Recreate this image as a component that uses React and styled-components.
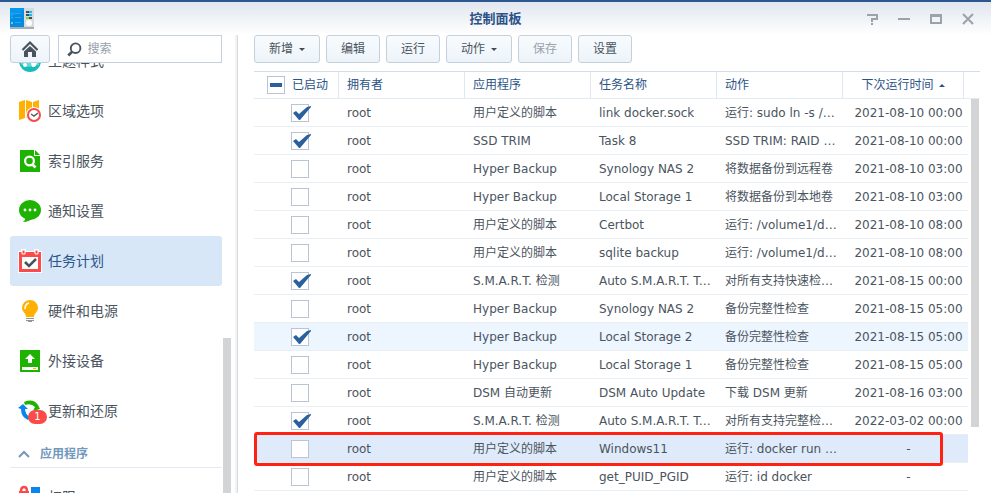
import React, { useState } from 'react';
import styled, { createGlobalStyle, css } from 'styled-components';

const GlobalStyle = createGlobalStyle`
  * { box-sizing: border-box; }
  body {
    margin: 0;
    background: #fff;
    color: #4a545e;
    font: 12px/18px "DejaVu Sans", "Noto Sans CJK SC", sans-serif;
  }
  button, input { font: inherit; color: inherit; }
`;

const Window = styled.div`
  display: flex;
  flex-direction: column;
  height: 100vh;
  overflow: hidden;
  border-top: 2px solid #2c578f;
`;

const TitleBar = styled.header`
  display: grid;
  grid-template-columns: 1fr auto 1fr;
  align-items: center;
  flex: none;
  height: 33px;
  padding: 0 10px;
  background: linear-gradient(#e0e6ef, #fff);
`;

const Title = styled.h1`
  margin: 0;
  font-size: 13px;
  line-height: 18px;
  font-weight: 700;
  color: #2b5388;
`;

const WindowControls = styled.div`
  display: flex;
  justify-content: flex-end;
  gap: 16px;
  padding-right: 5px;
`;

const WindowButton = styled.button`
  width: 16px;
  height: 16px;
  padding: 0;
  border: 0;
  background: none;
  svg { display: block; }
`;

const Body = styled.div`
  display: flex;
  flex: 1;
  min-height: 0;
`;

const Sidebar = styled.aside`
  display: flex;
  flex-direction: column;
  flex: none;
  width: 238px;
  border-right: 1px solid #d6dadd;
  box-shadow: inset -2px 0 1px #f1f2f3;
`;

const SidebarTools = styled.div`
  display: flex;
  gap: 8px;
  flex: none;
  padding: 0 15px 0 10px;
`;

const buttonFace = css`
  height: 28px;
  border: 1px solid #c5d0dc;
  border-radius: 3px;
  background: linear-gradient(#f7fbfe, #edf4f9);
`;

const HomeButton = styled.button`
  ${buttonFace}
  display: flex;
  align-items: center;
  justify-content: center;
  width: 40px;
  padding: 0;
`;

const SearchBox = styled.label`
  display: flex;
  align-items: center;
  gap: 6px;
  flex: 1;
  height: 28px;
  padding: 0 8px;
  border: 1px solid #c5d0dc;
`;

const SearchInput = styled.input`
  width: 100%;
  min-width: 0;
  padding: 0;
  border: 0;
  outline: 0;
  background: none;
  &::placeholder { color: #96a0aa; opacity: 1; }
`;

const SidebarBody = styled.div`
  display: flex;
  flex: 1;
  min-height: 0;
  padding: 0 6px 0 10px;
  overflow: hidden;
`;

const NavList = styled.nav`
  flex: 1;
  margin-top: -27px;
  clip-path: inset(27px 0 0 0);
`;

const NavItem = styled.a`
  display: flex;
  align-items: center;
  gap: 6px;
  height: 50px;
  padding-left: 8px;
  border-radius: 3px;
  font-size: 14px;
  text-decoration: none;
  color: ${p => (p.$active ? '#2b5388' : '#4a545e')};
  background: ${p => (p.$active ? '#d7e7f8' : 'transparent')};
`;

const NavIcon = styled.span`
  position: relative;
  width: 24px;
  height: 24px;
  svg { display: block; }
`;

const CountBadge = styled.span`
  position: absolute;
  right: -5px;
  bottom: -1px;
  width: 19px;
  height: 14px;
  border-radius: 7px;
  background: #fa4a4a;
  color: #fff;
  font-size: 10px;
  line-height: 14px;
  text-align: center;
`;

const GroupButton = styled.button`
  display: flex;
  align-items: center;
  gap: 10px;
  width: 100%;
  height: 32px;
  margin-bottom: 4px;
  padding: 4px 0 0 8px;
  border: 0;
  border-bottom: 1px solid #e3eaf1;
  background: none;
  font-weight: 700;
  color: #7298bd;
`;

const ScrollTrack = styled.div`
  flex: none;
  width: 8px;
  margin-left: 1px;
  padding-top: 275px;
`;

const ScrollThumb = styled.div`
  width: 8px;
  height: 100%;
  background: #d2d4d6;
`;

const Main = styled.main`
  flex: 1;
  min-width: 0;
  padding: 0 11px 0 16px;
  overflow: hidden;
`;

const Toolbar = styled.div`
  display: flex;
  gap: 6px;
  margin-bottom: 8px;
`;

const ToolButton = styled.button`
  ${buttonFace}
  display: flex;
  align-items: center;
  gap: 6px;
  padding: 0 14px;
  &:disabled { color: #9aa3ac; }
`;

const TableArea = styled.div`
  position: relative;
`;

const TaskTable = styled.table`
  width: 100%;
  table-layout: fixed;
  border-spacing: 0;
  border-top: 1px solid #d3dde7;
`;

const Col = styled.col`
  width: ${p => p.$width}px;
`;

const HeadCell = styled.th`
  height: 27px;
  padding: 0 8px;
  border-bottom: 1px solid #e3ebf2;
  border-right: ${p => (p.$last ? '0' : '1px solid #dfe8f1')};
  color: #2b5388;
  font-weight: 400;
  text-align: ${p => (p.$center ? 'center' : 'left')};
  white-space: nowrap;
`;

const Row = styled.tr`
  position: relative;
  --row: ${p => ({ hover: '#edf5fe', selected: '#dfebfa' })[p.$state] || '#fff'};
`;

const Cell = styled.td`
  height: 28px;
  padding: 0 ${p => (p.$center ? 0 : 2)}px 0 ${p => (p.$center ? 6 : 8)}px;
  border-bottom: 1px solid #e9eff5;
  background: var(--row);
  text-align: ${p => (p.$center ? 'center' : 'left')};
  white-space: nowrap;
  overflow: hidden;
  text-overflow: ellipsis;
`;

const CheckCell = styled(Cell)`
  padding: 0 0 0 37px;
  overflow: visible;
`;

const GutterCell = styled.td`
  padding: 0;
`;

const EnabledLabel = styled.label`
  display: flex;
  align-items: center;
  gap: 7px;
  padding-left: 5px;
`;

const CheckWrap = styled.span`
  position: relative;
  display: block;
  width: 18px;
  height: 18px;
  svg {
    position: absolute;
    left: 0;
    top: 0;
    pointer-events: none;
  }
`;

const CheckInput = styled.input`
  appearance: none;
  display: block;
  width: 18px;
  height: 18px;
  margin: 0;
  border: 1px solid #bac4d5;
  background: #fff;
`;

const TableThumb = styled.div`
  position: absolute;
  top: 28px;
  right: 1px;
  width: 8px;
  height: 328px;
  background: #d2d4d6;
`;

const Highlight = styled.div`
  position: absolute;
  inset: -3px 37px -3px 0;
  z-index: 1;
  border: 3px solid #ff2213;
  border-radius: 3px;
  pointer-events: none;
`;

const SortArrow = styled.svg`
  margin-left: 5px;
  vertical-align: middle;
`;

function AppIcon() {
  return (
    <svg width="24" height="21" viewBox="0 0 24 21" aria-hidden="true">
      <rect y="19" width="24" height="2" fill="#a5adb5" />
      <path d="M0 0H14V19H0Z" fill="#0797ed" />
      <path d="M0 10L14 2V19H0Z" fill="#078be0" />
      <path d="M14 0H24V19H14Z" fill="#d6dbe0" />
      <path d="M1 5.5L2 6.5L3 5M1 9.5L2 10.5L3 9" fill="none" stroke="#35b7f5" />
      <path d="M1 14H3V16H1Z" fill="#5fd0fa" />
      <path d="M5 5.5H11M5 9.5H11M5 14.5H11" stroke="#22a9f0" />
      <path d="M16 4H22M16 7H22M16 10H22" stroke="#405059" strokeWidth="2" />
      <path d="M19 4H22M19 7H22" stroke="#1abaf2" strokeWidth="2" />
      <path d="M16 10H19" stroke="#80da22" strokeWidth="2" />
      <circle cx="19" cy="15" r="3" fill="#fff" />
    </svg>
  );
}

const controlShapes = {
  帮助: <path d="M3 4H13V8H8V11M8 12V14" strokeWidth="2" />,
  最小化: <path d="M2 8H14" strokeWidth="2" />,
  最大化: (
    <>
      <path d="M2 4.5H14" strokeWidth="3" />
      <path d="M3 5V12H13V5" strokeWidth="2" />
    </>
  ),
  关闭: <path d="M3 3L13 13M13 3L3 13" strokeWidth="2" />,
};

function HomeIcon() {
  return (
    <svg width="18" height="18" viewBox="0 0 18 18" fill="none" aria-hidden="true">
      <path d="M1.5 10L9 2.5L16.5 10" stroke="#48535e" strokeWidth="2.2" />
      <path d="M3 11.5L9 6L15 11.5V17H11V12H7V17H3Z" fill="#48535e" />
    </svg>
  );
}

function SearchIcon() {
  return (
    <svg width="17" height="17" viewBox="0 0 17 17" fill="none" stroke="#48535e" aria-hidden="true">
      <circle cx="10" cy="7" r="5.6" strokeWidth="2.2" />
      <path d="M6 11L1.5 15.5" strokeWidth="3.2" />
    </svg>
  );
}

const navShapes = {
  theme: (
    <>
      <circle cx="12" cy="12" r="11" fill="#17bcbd" />
      <path d="M3 15Q7 20 21 16L20 11H3Z" fill="#5fdcd8" />
      <circle cx="7" cy="16" r="2" fill="#fff" />
      <path d="M13 14H19L17 18H14Z" fill="#fff" />
    </>
  ),
  region: (
    <>
      <path d="M1 3L7 1V19L1 21Z" fill="#ffb000" />
      <path d="M8 1L14 3V21L8 19Z" fill="#ffb000" />
      <path d="M15 3L21 1V18L15 20Z" fill="#ffb000" />
      <circle cx="16" cy="16" r="8" fill="#fff" />
      <circle cx="16" cy="16" r="6" fill="#fff" stroke="#f74a4e" strokeWidth="2" />
      <path d="M13 15L16 17L20 14" fill="none" stroke="#505a64" strokeWidth="1.5" />
    </>
  ),
  index: (
    <>
      <path d="M2 1H16V7H22V23H2Z" fill="#1eb300" />
      <path d="M17 1L22 6H17Z" fill="#1eb300" />
      <circle cx="11.5" cy="12" r="4.4" fill="none" stroke="#fff" strokeWidth="2.2" />
      <path d="M14 15L17.5 18.5" stroke="#fff" strokeWidth="2.6" />
    </>
  ),
  notify: (
    <>
      <ellipse cx="12" cy="11" rx="11" ry="10" fill="#1eb300" />
      <path d="M7 18L7 21L5 23Q11 23 15 19Z" fill="#1eb300" />
      <circle cx="7" cy="11" r="1.4" fill="#fff" />
      <circle cx="12" cy="11" r="1.4" fill="#fff" />
      <circle cx="17" cy="11" r="1.4" fill="#fff" />
    </>
  ),
  tasks: (
    <>
      <path d="M0 2H3V0H8V2H16V0H21V2H24V24H0Z" fill="#fff" />
      <path d="M1 3H23V23H1Z" fill="#fa4a4a" />
      <path d="M4 8H20V20H4Z" fill="#fff" />
      <path d="M4 1H7V5H4ZM17 1H20V5H17Z" fill="#fa4a4a" stroke="#fff" />
      <path d="M7 13L11 17L18 10" fill="none" stroke="#48535e" strokeWidth="2.5" />
    </>
  ),
  power: (
    <>
      <path d="M12 1A8 8 0 0 0 4 9C4 13 8 14 8 18H16C16 14 20 13 20 9A8 8 0 0 0 12 1Z" fill="#ffb000" />
      <path d="M7 10Q7 5 11 4" fill="none" stroke="#fff" strokeWidth="1.6" />
      <path d="M8 19.5H16M8 21.5H16M10 22.5H14" stroke="#8b969f" />
    </>
  ),
  external: (
    <>
      <path d="M2 1H22V23H2Z" fill="#1eb300" />
      <path d="M12 5L17 10H14V14H10V10H7Z" fill="#fff" />
      <path d="M4 18H20V21H4Z" fill="#fff" />
      <path d="M15 19.5H18" stroke="#ffb000" />
    </>
  ),
  update: (
    <>
      <path d="M6 3Q15 -1 20 6L22 10L15 12L17 8Q13 4 7 6Z" fill="#1eb300" />
      <path d="M0 9L5 5L10 10H7Q7 15 12 18L10 21Q3 18 3 10Z" fill="#0a84ee" />
    </>
  ),
  privilege: (
    <>
      <path d="M3 10V6Q3 2 6 2Q9 2 9 6V10" fill="none" stroke="#fa4a4a" strokeWidth="2.4" />
      <path d="M1 6H11V14H1Z" fill="#fa4a4a" />
      <path d="M13 2H22V12H13Z" fill="#0a84ee" />
      <path d="M1 15H11V23H1Z" fill="#ffb000" />
      <path d="M13 14H22V23H13Z" fill="#1eb300" />
    </>
  ),
};

const navItems = [
  { icon: 'theme', label: '主题样式' },
  { icon: 'region', label: '区域选项' },
  { icon: 'index', label: '索引服务' },
  { icon: 'notify', label: '通知设置' },
  { icon: 'tasks', label: '任务计划', active: true },
  { icon: 'power', label: '硬件和电源' },
  { icon: 'external', label: '外接设备' },
  { icon: 'update', label: '更新和还原', count: 1 },
];

function NavEntry({ icon, label, active, count }) {
  return (
    <NavItem href="#" $active={active} aria-current={active ? 'page' : undefined}>
      <NavIcon>
        <svg width="24" height="24" viewBox="0 0 24 24" aria-hidden="true">{navShapes[icon]}</svg>
        {count && <CountBadge>{count}</CountBadge>}
      </NavIcon>
      {label}
    </NavItem>
  );
}

const script = '用户定义的脚本';
const tasks = [
  [true, script, 'link docker.sock', '运行: sudo ln -s /var', '2021-08-10 00:00'],
  [true, 'SSD TRIM', 'Task 8', 'SSD TRIM: RAID 1-2', '2021-08-10 00:00'],
  [false, 'Hyper Backup', 'Synology NAS 2', '将数据备份到远程卷', '2021-08-10 03:00'],
  [false, 'Hyper Backup', 'Local Storage 1', '将数据备份到本地卷', '2021-08-10 03:00'],
  [false, script, 'Certbot', '运行: /volume1/data', '2021-08-10 08:00'],
  [false, script, 'sqlite backup', '运行: /volume1/data', '2021-08-10 08:00'],
  [true, 'S.M.A.R.T. 检测', 'Auto S.M.A.R.T. Test', '对所有支持快速检测', '2021-08-15 00:00'],
  [false, 'Hyper Backup', 'Synology NAS 2', '备份完整性检查', '2021-08-15 05:00'],
  [true, 'Hyper Backup', 'Local Storage 2', '备份完整性检查', '2021-08-15 05:00', 'hover'],
  [false, 'Hyper Backup', 'Local Storage 1', '备份完整性检查', '2021-08-15 05:00'],
  [false, 'DSM 自动更新', 'DSM Auto Update', '下载 DSM 更新', '2021-08-16 03:00'],
  [true, 'S.M.A.R.T. 检测', 'Auto S.M.A.R.T. Test', '对所有支持完整检测的', '2022-03-02 00:00'],
  [false, script, 'Windows11', '运行: docker run win', '-', 'selected'],
  [false, script, 'get_PUID_PGID', '运行: id docker', '-'],
];
tasks[6][3] = '对所有支持快速检测的';

function TaskRow({ task }) {
  const [enabled, app, name, action, next, state] = task;
  const [checked, setChecked] = useState(enabled);
  return (
    <Row $state={state}>
      <CheckCell>
        <CheckWrap>
          <CheckInput
            type="checkbox"
            aria-label={name}
            checked={checked}
            onChange={e => setChecked(e.target.checked)}
          />
          {checked && (
            <svg width="20" height="18" viewBox="0 0 20 18" aria-hidden="true">
              <path d="M2 9L5 7L8 10L16 3L20 2V3L9 16H8Z" fill="#2b609f" />
            </svg>
          )}
        </CheckWrap>
        {state === 'selected' && <Highlight />}
      </CheckCell>
      <Cell>root</Cell>
      <Cell>{app}</Cell>
      <Cell>{name}</Cell>
      <Cell>{action}</Cell>
      <Cell $center colSpan={2}>{next}</Cell>
      <GutterCell />
    </Row>
  );
}

const toolButtons = [
  { label: '新增', menu: true },
  { label: '编辑' },
  { label: '运行' },
  { label: '动作', menu: true },
  { label: '保存', disabled: true },
  { label: '设置' },
];

export default function App() {
  return (
    <>
      <GlobalStyle />
      <Window>
        <TitleBar>
          <AppIcon />
          <Title>控制面板</Title>
          <WindowControls>
            {Object.entries(controlShapes).map(([label, shape]) => (
              <WindowButton key={label} aria-label={label}>
                <svg width="16" height="16" viewBox="0 0 16 16" fill="none" stroke="#9ca2aa">{shape}</svg>
              </WindowButton>
            ))}
          </WindowControls>
        </TitleBar>
        <Body>
          <Sidebar>
            <SidebarTools>
              <HomeButton aria-label="主页"><HomeIcon /></HomeButton>
              <SearchBox>
                <SearchIcon />
                <SearchInput type="text" placeholder="搜索" aria-label="搜索" />
              </SearchBox>
            </SidebarTools>
            <SidebarBody>
              <NavList>
                {navItems.map(item => <NavEntry key={item.label} {...item} />)}
                <GroupButton>
                  <svg width="12" height="8" viewBox="0 0 12 8" fill="none" aria-hidden="true">
                    <path d="M1 7L6 2L11 7" stroke="#7298bd" strokeWidth="2" />
                  </svg>
                  应用程序
                </GroupButton>
                <NavEntry icon="privilege" label="权限" />
              </NavList>
              <ScrollTrack><ScrollThumb /></ScrollTrack>
            </SidebarBody>
          </Sidebar>
          <Main>
            <Toolbar>
              {toolButtons.map(({ label, menu, disabled }) => (
                <ToolButton key={label} disabled={disabled}>
                  {label}
                  {menu && (
                    <svg width="6" height="3" viewBox="0 0 6 3" aria-hidden="true">
                      <path d="M0 0H6L3 3Z" fill="#414b55" />
                    </svg>
                  )}
                </ToolButton>
              ))}
            </Toolbar>
            <TableArea>
              <TaskTable>
                <colgroup>
                  <Col $width={85} />
                  <col />
                  <col />
                  <col />
                  <col />
                  <Col $width={121} />
                  <Col $width={4} />
                  <Col $width={12} />
                </colgroup>
                <thead>
                  <tr>
                    <HeadCell>
                      <EnabledLabel>
                        <CheckWrap>
                          <CheckInput type="checkbox" />
                          <svg width="18" height="18" viewBox="0 0 18 18" aria-hidden="true">
                            <path d="M3 7H15V11H3Z" fill="#2b609f" />
                          </svg>
                        </CheckWrap>
                        已启动
                      </EnabledLabel>
                    </HeadCell>
                    <HeadCell>拥有者</HeadCell>
                    <HeadCell>应用程序</HeadCell>
                    <HeadCell>任务名称</HeadCell>
                    <HeadCell>动作</HeadCell>
                    <HeadCell $center>
                      下次运行时间
                      <SortArrow width="6" height="3" viewBox="0 0 6 3" aria-hidden="true">
                        <path d="M0 3H6L3 0Z" fill="#2b5388" />
                      </SortArrow>
                    </HeadCell>
                    <HeadCell as="td" $last colSpan={2} />
                  </tr>
                </thead>
                <tbody>
                  {tasks.map((task, i) => <TaskRow key={i} task={task} />)}
                </tbody>
              </TaskTable>
              <TableThumb />
            </TableArea>
          </Main>
        </Body>
      </Window>
    </>
  );
}
